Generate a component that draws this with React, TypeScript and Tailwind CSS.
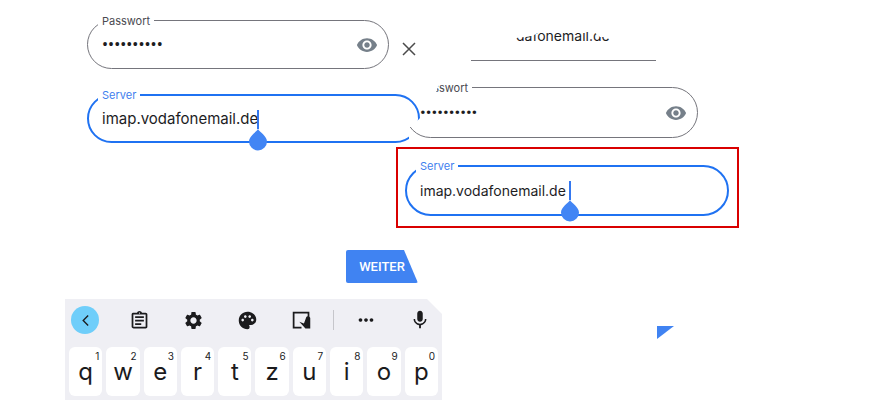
import React from 'react';
import clsx from 'clsx';
import {
    MdArrowBackIosNew,
    MdMic,
    MdMoreHoriz,
    MdOutlineAssignment,
    MdPalette,
    MdSettings,
    MdVisibility,
} from 'react-icons/md';

interface FieldProps {
    id: string;
    label: string;
    value: string;
    type?: 'text' | 'password';
    active?: boolean;
    className?: string;
    frameClassName?: string;
    labelClassName?: string;
    inputClassName?: string;
    caretClassName?: string;
}

const Field: React.FC<FieldProps> = ({
    id,
    label,
    value,
    type = 'text',
    active = false,
    className,
    frameClassName,
    labelClassName,
    inputClassName,
    caretClassName,
}) => (
    <div className={clsx('relative flex items-center', className)}>
        <span
            aria-hidden="true"
            className={clsx(
                'absolute inset-0 rounded-full',
                active ? 'border-2 border-[#1f72f2]' : 'border border-[#75757c]',
                frameClassName,
            )}
        />
        <label
            htmlFor={id}
            className={clsx(
                'absolute -top-[7px] left-[11px] bg-white px-1 text-[11px] leading-4',
                active ? 'text-[#3f80ee]' : 'text-[#4a4a50]',
                labelClassName,
            )}
        >
            {label}
        </label>
        <input
            id={id}
            type={type}
            defaultValue={value}
            className={clsx('relative w-full bg-transparent pl-[15px] text-[#1d1d1f] outline-none', inputClassName)}
        />
        {type === 'password' && (
            <button type="button" aria-label="Passwort anzeigen" className="relative mr-[11px] text-[#76808a]">
                <MdVisibility className="size-[22px]" />
            </button>
        )}
        {/* Text cursor with drag handle */}
        {caretClassName && (
            <span aria-hidden="true" className={clsx('absolute top-4 flex flex-col items-center', caretClassName)}>
                <span className="h-[19px] w-[2px] bg-[#3478f0]" />
                <svg viewBox="0 0 18 22" className="h-[22px] w-[18px]">
                    <path d="M9 0C7.500 3 0 7 0 12.500a9 9 0 0 0 18 0C18 7 10.500 3 9 0Z" fill="#4285f4" />
                </svg>
            </span>
        )}
    </div>
);

const CloseIcon: React.FC<{ className?: string }> = ({ className }) => (
    <svg viewBox="0 0 18 18" fill="none" stroke="currentColor" strokeWidth="1.500" className={className}>
        <path d="M3 3l12 12M15 3L3 15" />
    </svg>
);

const StickerIcon: React.FC<{ className?: string }> = ({ className }) => (
    <svg viewBox="0 0 24 24" fill="currentColor" className={className}>
        <path d="M2 2h19v6h-2V4H4v15h8v2H2z" />
        <path d="M9.500 13.400l5.300 2 2.700-7.400c.8-1.800 4-1 4.500 1.200v12h-5.500z" />
    </svg>
);

const tools = [
    { name: 'Zwischenablage', icon: <MdOutlineAssignment className="size-[21px]" /> },
    { name: 'Einstellungen', icon: <MdSettings className="size-[21px]" /> },
    { name: 'Design', icon: <MdPalette className="size-[21px]" /> },
    { name: 'Einhandmodus', icon: <StickerIcon className="size-[21px]" /> },
];

const keys = [
    ['q', '1'],
    ['w', '2'],
    ['e', '3'],
    ['r', '4'],
    ['t', '5'],
    ['z', '6'],
    ['u', '7'],
    ['i', '8'],
    ['o', '9'],
    ['p', '0'],
];

const toolClass = 'flex size-7 shrink-0 items-center justify-center';

const Keyboard: React.FC = () => (
    <div className="bg-[#efeff4] pb-1 text-[#1b1b1d] [clip-path:polygon(0_0,calc(100%-15px)_0,100%_15px,100%_100%,0_100%)]">
        <div className="flex h-12 items-start gap-[26px] px-[6px] pt-[7px]">
            <button type="button" aria-label="Zurück" className={clsx(toolClass, 'rounded-full bg-[#6fcefa]')}>
                <MdArrowBackIosNew className="size-[13px]" />
            </button>
            {tools.map((tool) => (
                <button key={tool.name} type="button" aria-label={tool.name} className={toolClass}>
                    {tool.icon}
                </button>
            ))}
            <span className="-mx-2 mt-1 h-5 w-px shrink-0 bg-[#c6c6cb]" />
            <button type="button" aria-label="Mehr" className={toolClass}>
                <MdMoreHoriz className="size-[22px]" />
            </button>
            <button type="button" aria-label="Spracheingabe" className={toolClass}>
                <MdMic className="size-[22px]" />
            </button>
        </div>
        <div className="grid grid-cols-10 gap-1 px-1">
            {keys.map(([letter, digit]) => (
                <button
                    key={letter}
                    type="button"
                    className="relative h-[49px] rounded-md bg-white text-center text-[24px] leading-[48px]"
                >
                    {letter}
                    <span className="absolute top-[3px] right-[3px] text-[10px] leading-3">{digit}</span>
                </button>
            ))}
        </div>
    </div>
);

const App: React.FC = () => (
    <main className="flex min-h-screen items-start overflow-hidden bg-white font-['Inter',sans-serif]">
        {/* Full form with keyboard */}
        <section className="ml-[65px] w-[377px] shrink-0">
            <div className="pt-5 pl-[22px]">
                <div className="flex items-center gap-[11px]">
                    <Field
                        id="password"
                        label="Passwort"
                        value="geheim1234"
                        type="password"
                        className="h-[49px] w-[302px]"
                        inputClassName="font-['Roboto'] text-[18px]"
                    />
                    <button type="button" aria-label="Schließen" className="mt-2 text-[#4b4b4b]">
                        <CloseIcon className="size-[18px]" />
                    </button>
                </div>
                <Field
                    id="server"
                    label="Server"
                    value="imap.vodafonemail.de"
                    active
                    className="mt-[25px] h-[49px] w-[333px]"
                    frameClassName="[clip-path:polygon(0_0,100%_0,100%_24px,322px_36px,322px_100%,0_100%)]"
                    inputClassName="pt-[2px] text-[15px]"
                    caretClassName="left-[162px]"
                />
            </div>
            <button
                type="button"
                className="mt-[107px] ml-[281px] h-[33px] w-[72px] rounded-xs bg-[#4083f2] text-center font-['Roboto'] text-[13px] font-medium text-white [clip-path:polygon(0_0,58px_0,100%_100%,0_100%)]"
            >
                WEITER
            </button>
            <div className="mt-4">
                <Keyboard />
            </div>
        </section>

        {/* Detail with the highlighted server field */}
        <section className="-ml-[46px] w-[343px] shrink-0">
            <p className="mt-[26px] ml-[120px] text-[14px] leading-5 text-[#1d1d1f] [clip-path:polygon(0_12px,16px_10px,24px_6px,78px_6px,84px_11px,100%_11px,100%_100%,0_100%)]">
                dafonemail.de
            </p>
            <div className="mt-[14px] ml-[75px] h-px w-[185px] bg-[#75757c]" />
            <Field
                id="password-detail"
                label="Passwort"
                value="geheim1234"
                type="password"
                className="mt-[26px] ml-[9px] h-[51px] w-[293px]"
                frameClassName="[clip-path:polygon(40px_0,100%_0,100%_100%,5px_100%,5px_40px,40px_40px)]"
                labelClassName="[clip-path:polygon(24px_0,100%_0,100%_100%,19px_100%)]"
                inputClassName="font-['Roboto'] text-[17px]"
            />
            <div className="mt-[9px] border-2 border-[#d90000] pt-4 pr-2 pb-[10px] pl-[7px]">
                <Field
                    id="server-detail"
                    label="Server"
                    value="imap.vodafonemail.de"
                    active
                    className="h-[51px]"
                    inputClassName="text-[14px]"
                    caretClassName="left-[156px]"
                />
            </div>
            <div className="mt-[98px] ml-[261px] h-[13px] w-[17px] bg-[#4083f2] [clip-path:polygon(0_0,100%_0,0_100%)]" />
        </section>
    </main>
);

export default App;
